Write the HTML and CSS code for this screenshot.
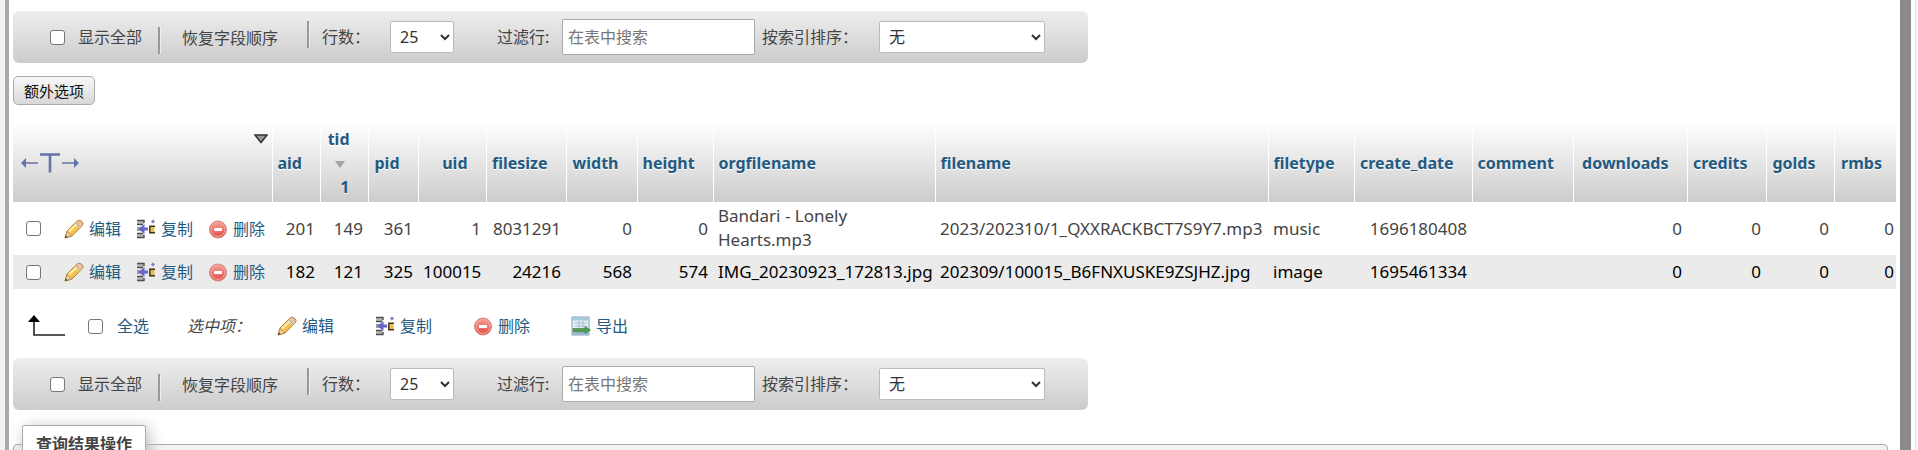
FILE: index.html
```html
<!DOCTYPE html>
<html lang="zh-CN">
<head>
  <meta charset="UTF-8">
  <title>phpMyAdmin</title>
  <meta name="viewport" content="width=device-width, initial-scale=1.0">
  <link rel="stylesheet" href="styles.css">
</head>
<body>
  <!-- shared icons -->
  <svg class="sprite" aria-hidden="true">
    <defs>
      <linearGradient id="gold" x1="0" y1="0" x2="1" y2="1">
        <stop offset="0" stop-color="#ffe98c"/>
        <stop offset="1" stop-color="#e9a32c"/>
      </linearGradient>
      <linearGradient id="red" x1="0" y1="0" x2="0" y2="1">
        <stop offset="0" stop-color="#f4a49b"/>
        <stop offset="1" stop-color="#de4a40"/>
      </linearGradient>
    </defs>
    <symbol id="i-edit" viewBox="0 0 20 20">
      <path d="M1 19l2-7 10-10q2-1.600 4.500.200 2.500 2.300.800 4.600L8 17z" fill="url(#gold)" stroke="#b98232" stroke-width="1"/>
      <path d="M13 2q2-1.600 4.500.200 2.500 2.300.800 4.600L16.500 8.500 11.500 3.700z" fill="#e9c3a0" stroke="#b58b5f" stroke-width=".8"/>
      <path d="M11 4.200l5 4.800" stroke="#cfcfcf" stroke-width="1.300"/>
      <path d="M5 12.500l7.500-7" stroke="#fff6b8" stroke-width="1.600"/>
      <path d="M1 19l2-6.500 4.700 4.600z" fill="#f0cfa0" stroke="#a57b42" stroke-width=".7"/>
      <path d="M1 19l.800-2.800 2 2z" fill="#5a4630"/>
    </symbol>
    <symbol id="i-copy" viewBox="0 0 20 20">
      <path d="M1 1h7v4H1zM1 15h7v4H1z" fill="#b9b9b9"/>
      <path d="M1 1.500h7.500M1 5.500h6M1 14.500h6M1 18.500h7.500M8 1v3M8 16v3" stroke="#4c4c4c" stroke-width="1.400"/>
      <path d="M1 8h4v4H1z" fill="#9a9a9a"/>
      <path d="M2.500 10l6-5v3.500H12v3H8.500V15z" fill="#6464cc"/>
      <path d="M13.500 7.500h5v6h-5z" fill="#e8bd4c"/>
      <path d="M19 7.300h-5.200v6.400H19" fill="none" stroke="#38321f" stroke-width="1.400"/>
      <path d="M17 .500l2 2-2 2-2-2z" fill="#7b7bd6"/>
    </symbol>
    <symbol id="i-drop" viewBox="0 0 20 20">
      <circle cx="10" cy="10.500" r="8.500" fill="url(#red)" stroke="#d9847d" stroke-width="1"/>
      <circle cx="10" cy="10.500" r="6.900" fill="none" stroke="#f3aaa3" stroke-width="1"/>
      <rect x="6" y="9" width="8" height="3" rx=".6" fill="#fff"/>
    </symbol>
    <symbol id="i-export" viewBox="0 0 20 20">
      <path d="M1 1h17v18H1z" fill="#e6eff6" stroke="#7f9db5"/>
      <path d="M1.500 1.500h16v3h-16z" fill="#a6c8dd"/>
      <path d="M4 7h12M4 10h12M8 5v7M12 5v7" stroke="#a8bccb" fill="none"/>
      <path d="M1.500 15.500h16v3h-16z" fill="#94b4c8"/>
      <path d="M2 12.500h12v-2l5.500 3.500-5.500 3.500v-2H2z" fill="#4f9c4c" stroke="#3a7a3b" stroke-width=".6"/>
    </symbol>
  </svg>

  <div class="frame">
    <div class="nav-edge"></div>

    <main class="page">
      <form class="navigation">
        <label class="show-all"><input type="checkbox">显示全部</label>
        <span class="divider low"></span>
        <button type="button" class="restore">恢复字段顺序</button>
        <span class="divider"></span>
        <label class="rows" for="rows1">行数：</label>
        <select id="rows1" class="rows-select"><option>25</option></select>
        <label class="filter" for="filter1">过滤行:</label>
        <input id="filter1" class="filter-text" type="text" placeholder="在表中搜索">
        <label class="sort" for="sort1">按索引排序：</label>
        <select id="sort1" class="sort-select"><option>无</option></select>
      </form>

      <button type="button" class="extra">额外选项</button>

      <table class="results">
        <colgroup>
          <col class="c-actions"><col class="c-id"><col class="c-id"><col class="c-pid"><col class="c-uid">
          <col class="c-size"><col class="c-width"><col class="c-height"><col class="c-org"><col class="c-name">
          <col class="c-type"><col class="c-date"><col class="c-comment"><col class="c-down"><col class="c-credits">
          <col class="c-golds"><col class="c-rmbs">
        </colgroup>
        <thead>
          <tr>
            <th class="actions">
              <div class="tools">
                <svg class="fulltext" viewBox="0 0 58 20" role="img" aria-label="完整内容">
                  <g fill="none" stroke="#6672aa">
                    <path d="M4 10h13M41 10h13" stroke-width="1.400"/>
                    <path d="M19 1.500h20M29 1.500v18" stroke-width="2.600"/>
                  </g>
                  <path d="M0 10l5-5v10zM58 10l-5-5v10z" fill="#6672aa"/>
                </svg>
                <svg class="toggle" viewBox="0 0 14 10" role="img" aria-label="显示列">
                  <path d="M1 1h12L7 8.500z" fill="#999" stroke="#333" stroke-width="1.500"/>
                </svg>
              </div>
            </th>
            <th class="num"><a href="#">aid</a></th>
            <th class="num"><a href="#">tid
              <svg class="sorted" viewBox="0 0 10 8"><path d="M0 1h10L5 8z" fill="#a5a5a5"/></svg>
              <span>1</span></a></th>
            <th class="num"><a href="#">pid</a></th>
            <th class="num"><a href="#">uid</a></th>
            <th class="num"><a href="#">filesize</a></th>
            <th class="num"><a href="#">width</a></th>
            <th class="num"><a href="#">height</a></th>
            <th><a href="#">orgfilename</a></th>
            <th><a href="#">filename</a></th>
            <th><a href="#">filetype</a></th>
            <th class="num"><a href="#">create_date</a></th>
            <th><a href="#">comment</a></th>
            <th class="num"><a href="#">downloads</a></th>
            <th class="num"><a href="#">credits</a></th>
            <th class="num"><a href="#">golds</a></th>
            <th class="num"><a href="#">rmbs</a></th>
          </tr>
        </thead>
        <tbody>
          <tr>
            <td class="actions">
              <div class="row-links">
                <input type="checkbox" aria-label="201">
                <a href="#"><svg><use href="#i-edit"/></svg>编辑</a>
                <a href="#"><svg><use href="#i-copy"/></svg>复制</a>
                <a href="#"><svg><use href="#i-drop"/></svg>删除</a>
              </div>
            </td>
            <td class="num">201</td>
            <td class="num">149</td>
            <td class="num">361</td>
            <td class="num">1</td>
            <td class="num">8031291</td>
            <td class="num">0</td>
            <td class="num">0</td>
            <td class="wrap">Bandari - Lonely Hearts.mp3</td>
            <td>2023/202310/1_QXXRACKBCT7S9Y7.mp3</td>
            <td>music</td>
            <td class="num">1696180408</td>
            <td></td>
            <td class="num">0</td>
            <td class="num">0</td>
            <td class="num">0</td>
            <td class="num">0</td>
          </tr>
          <tr class="hover">
            <td class="actions">
              <div class="row-links">
                <input type="checkbox" aria-label="182">
                <a href="#"><svg><use href="#i-edit"/></svg>编辑</a>
                <a href="#"><svg><use href="#i-copy"/></svg>复制</a>
                <a href="#"><svg><use href="#i-drop"/></svg>删除</a>
              </div>
            </td>
            <td class="num">182</td>
            <td class="num">121</td>
            <td class="num">325</td>
            <td class="num">100015</td>
            <td class="num">24216</td>
            <td class="num">568</td>
            <td class="num">574</td>
            <td>IMG_20230923_172813.jpg</td>
            <td>202309/100015_B6FNXUSKE9ZSJHZ.jpg</td>
            <td>image</td>
            <td class="num">1695461334</td>
            <td></td>
            <td class="num">0</td>
            <td class="num">0</td>
            <td class="num">0</td>
            <td class="num">0</td>
          </tr>
        </tbody>
      </table>

      <div class="with-selected">
        <svg class="arrow" viewBox="0 0 38 22">
          <path d="M7 5v15h31" fill="none" stroke="#222" stroke-width="1.600"/>
          <path d="M7 0l6 7H1z" fill="#000"/>
        </svg>
        <label class="check-all"><input type="checkbox">全选</label>
        <i>选中项：</i>
        <a href="#"><svg><use href="#i-edit"/></svg>编辑</a>
        <a href="#"><svg><use href="#i-copy"/></svg>复制</a>
        <a href="#"><svg><use href="#i-drop"/></svg>删除</a>
        <a href="#"><svg><use href="#i-export"/></svg>导出</a>
      </div>

      <form class="navigation">
        <label class="show-all"><input type="checkbox">显示全部</label>
        <span class="divider low"></span>
        <button type="button" class="restore">恢复字段顺序</button>
        <span class="divider"></span>
        <label class="rows" for="rows2">行数：</label>
        <select id="rows2" class="rows-select"><option>25</option></select>
        <label class="filter" for="filter2">过滤行:</label>
        <input id="filter2" class="filter-text" type="text" placeholder="在表中搜索">
        <label class="sort" for="sort2">按索引排序：</label>
        <select id="sort2" class="sort-select"><option>无</option></select>
      </form>

      <fieldset class="operations">
        <legend>查询结果操作</legend>
      </fieldset>
    </main>

    <div class="scroll-edge"></div>
  </div>
</body>
</html>
```
FILE: styles.css
```css
* { box-sizing: border-box; }
body {
  margin: 0;
  background: #fff;
  color: #444;
  font-family: "Noto Sans", "Noto Sans CJK SC", sans-serif;
  font-size: 16px;
  line-height: 24px;
  overflow: hidden;
}
a { color: #235a81; text-decoration: none; }
a:hover { text-decoration: underline; }
input, select, button { font-family: inherit; font-size: 16px; color: inherit; margin: 0; }
.sprite { position: absolute; width: 0; height: 0; }

.frame { display: flex; height: 100vh; }
.nav-edge { flex: none; width: 9px; background: #f3f3f3; border-right: 4px solid #aaa; }
.page { flex: 1; min-width: 0; padding: 11px 4px 0; }
.scroll-edge {
  flex: none;
  width: 18px;
  background: #fafafa;
  border-left: 11px solid #8b8b8b;
  box-shadow: inset 4px 0 0 #fff, inset 5px 0 0 #ddd;
}

input[type="checkbox"] {
  appearance: none;
  flex: none;
  width: 15px;
  height: 15px;
  background: #fff;
  border: 1px solid #767676;
  border-radius: 3px;
}
input[type="checkbox"]:checked { background: #235a81; }

/* toolbar above and below the results */
.navigation {
  display: flex;
  align-items: center;
  width: fit-content;
  height: 52px;
  padding: 0 43px 0 37px;
  background: linear-gradient(#eee, #ccc);
  border-radius: 6px;
  white-space: nowrap;
}
.show-all { display: flex; align-items: center; gap: 13px; }
.divider {
  flex: none;
  align-self: flex-start;
  width: 3px;
  height: 27px;
  margin-top: 10px;
  background: #999;
  border-right: 1px solid #eee;
}
.divider.low { margin: 16px 0 0 16px; }
.restore { border: 0; background: none; padding: 0; margin: 0 28px 0 21px; }
button.restore { margin: 0 29px 0 21px; }
.rows { width: 68px; margin-left: 12px; }
.navigation select {
  height: 32px;
  padding: 0 5px;
  background-color: #fff;
  border: 1px solid #bbb;
  border-radius: 2px;
  color: #333;
}
.navigation .rows-select { width: 64px; }
.navigation .sort-select { width: 166px; }
.filter { width: 65px; margin-left: 43px; }
.filter-text {
  width: 193px;
  height: 36px;
  padding: 0 5px;
  border: 1px solid #aaa;
  border-radius: 2px;
}
.filter-text::placeholder { color: #777; }
.sort { width: 117px; margin-left: 7px; }

.extra {
  display: block;
  height: 29px;
  margin-top: 13px;
  padding: 0 10px;
  border: 1px solid #aaa;
  border-radius: 5px;
  background: linear-gradient(#f8f8f8, #d8d8d8);
  color: #111;
  font-size: 15px;
}

/* results */
.results {
  width: 100%;
  margin-top: 18px;
  table-layout: fixed;
  border-collapse: collapse;
}
.c-actions { width: 259px; }
.c-id { width: 48px; }
.c-pid { width: 50px; }
.c-uid { width: 68px; }
.c-size { width: 80px; }
.c-width { width: 71px; }
.c-height { width: 76px; }
.c-org { width: 222px; }
.c-type { width: 86px; }
.c-date { width: 118px; }
.c-comment { width: 101px; }
.c-down { width: 114px; }
.c-credits { width: 79px; }
.c-golds { width: 68px; }
.c-rmbs { width: 62px; }
.results thead tr { background: linear-gradient(#fff, #ccc); }
.results th {
  height: 79px;
  padding: 0 18px 0 5px;
  border-right: 1px solid #fff;
  text-align: left;
  text-shadow: 0 1px 0 #fff;
}
.results th:last-child { padding-right: 14px; border-right: 0; }
.results td { height: 34px; padding: 0 5px; font-size: 17px; white-space: nowrap; }
.results td:last-child { padding-right: 2px; }
.results td.wrap { padding: 2px 60px 3px 5px; white-space: normal; }
.results .num { text-align: right; }
.results .hover { background: #ebebeb; color: #000; }
.results th.actions { padding: 0 4px 0 8px; }
.tools { display: flex; justify-content: space-between; align-items: center; height: 58px; }
.fulltext { width: 58px; height: 20px; }
.toggle { width: 14px; height: 10px; align-self: flex-start; }
.sorted { display: block; width: 10px; height: 8px; margin: 9px 5px 7px auto; }

.results td.actions { padding: 0 0 0 13px; }
.row-links { display: flex; align-items: center; font-size: 16px; }
.row-links a { margin-right: 15px; }
.row-links input[type="checkbox"] { margin-right: 23px; }
.row-links a, .with-selected a { display: flex; align-items: center; gap: 5px; }
.row-links a svg, .with-selected a svg { width: 20px; height: 20px; }

.with-selected { display: flex; align-items: center; height: 24px; margin: 25px 0 20px 14px; }
.arrow { width: 38px; height: 22px; }
.check-all { display: flex; align-items: center; gap: 14px; margin-left: 23px; color: #235a81; }
.with-selected i { width: 90px; margin-left: 38px; }
.with-selected a { margin-right: 41px; }

.operations {
  height: 200px;
  margin: 15px 8px 0 0;
  padding: 0 8px;
  border: 1px solid #aaa;
  border-radius: 4px;
  background: linear-gradient(#f3f3f3, #e8e8e8);
}
.operations legend {
  padding: 6px 13px;
  border: 1px solid #aaa;
  border-radius: 2px;
  background: #fff;
  box-shadow: 3px 3px 15px #bbb;
  font-weight: bold;
}
```
